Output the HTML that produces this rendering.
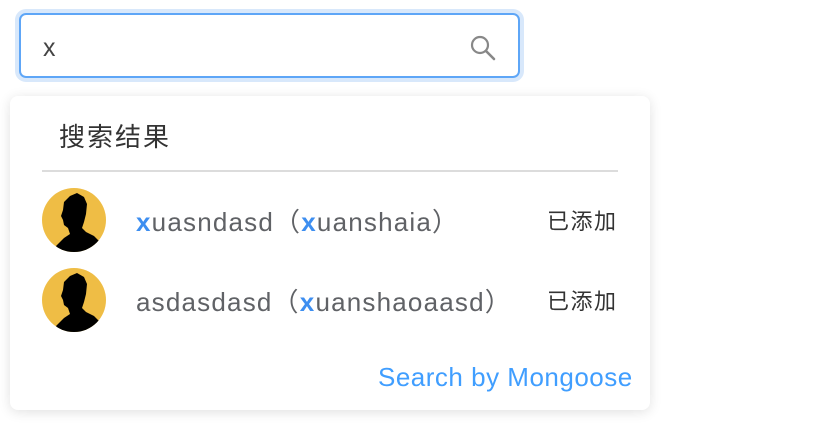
<!DOCTYPE html>
<html><head><meta charset="utf-8"><style>
body{margin:0;width:840px;height:430px;background:#fff;position:relative;overflow:hidden;font-family:"Liberation Sans","Noto Sans CJK SC",sans-serif}
.inp{position:absolute;left:19px;top:13px;width:497px;height:61px;border:2px solid #5ea6f7;border-radius:7px;box-shadow:0 0 0 4px #d8e8fb;}
.inp .x{position:absolute;left:22px;top:19px;font-size:25px;color:#444}
.inp svg{position:absolute;left:448px;top:19px}
.dd{position:absolute;left:10px;top:96px;width:640px;height:314px;background:#fff;border-radius:8px;box-shadow:0 2px 12px rgba(0,0,0,.12)}
.t{position:absolute;left:49px;top:21px;font-size:26px;letter-spacing:2px;color:#333}
.ln{position:absolute;left:32px;top:74px;width:576px;height:2px;background:#dcdcdc}
.av{position:absolute;left:32px;width:64px;height:64px;border-radius:50%;background:#efbd45;overflow:hidden}
.nm{position:absolute;left:126px;font-size:26px;letter-spacing:1.2px;color:#606266;white-space:nowrap}
.nm b{color:#3d8ef0}
.ad{position:absolute;left:537px;font-size:22px;letter-spacing:1.5px;color:#333}
.ft{position:absolute;left:368px;top:266px;font-size:26px;letter-spacing:0.5px;color:#409eff;white-space:nowrap}
</style></head><body>
<div class="inp"><span class="x">x</span>
<svg width="28" height="28" viewBox="0 0 28 28"><circle cx="11" cy="11" r="8" fill="none" stroke="#888" stroke-width="2.2"/><path d="M17 17L25 25" stroke="#888" stroke-width="2.6" stroke-linecap="round"/></svg></div>
<div class="dd">
<div class="t">搜索结果</div>
<div class="ln"></div>
<div class="av" style="top:92px"><svg width="64" height="64" viewBox="0 0 64 64"><path d="M18 64 L14 58 L22 50 L28 46 L26 40 L22 37 L21 32 L19 28 L21 22 L22 14 L28 8 L35 5 L42 9 L45 16 L44 26 L42 34 L40 40 L44 44 L52 48 L58 54 L60 64Z" fill="#000"/></svg></div>
<div class="nm" style="top:106px"><b>x</b>uasndasd（<b>x</b>uanshaia）</div>
<div class="ad" style="top:108px">已添加</div>
<div class="av" style="top:172px"><svg width="64" height="64" viewBox="0 0 64 64"><path d="M18 64 L14 58 L22 50 L28 46 L26 40 L22 37 L21 32 L19 28 L21 22 L22 14 L28 8 L35 5 L42 9 L45 16 L44 26 L42 34 L40 40 L44 44 L52 48 L58 54 L60 64Z" fill="#000"/></svg></div>
<div class="nm" style="top:186px">asdasdasd（<b>x</b>uanshaoaasd）</div>
<div class="ad" style="top:188px">已添加</div>
<div class="ft">Search by Mongoose</div>
</div>
</body></html>
